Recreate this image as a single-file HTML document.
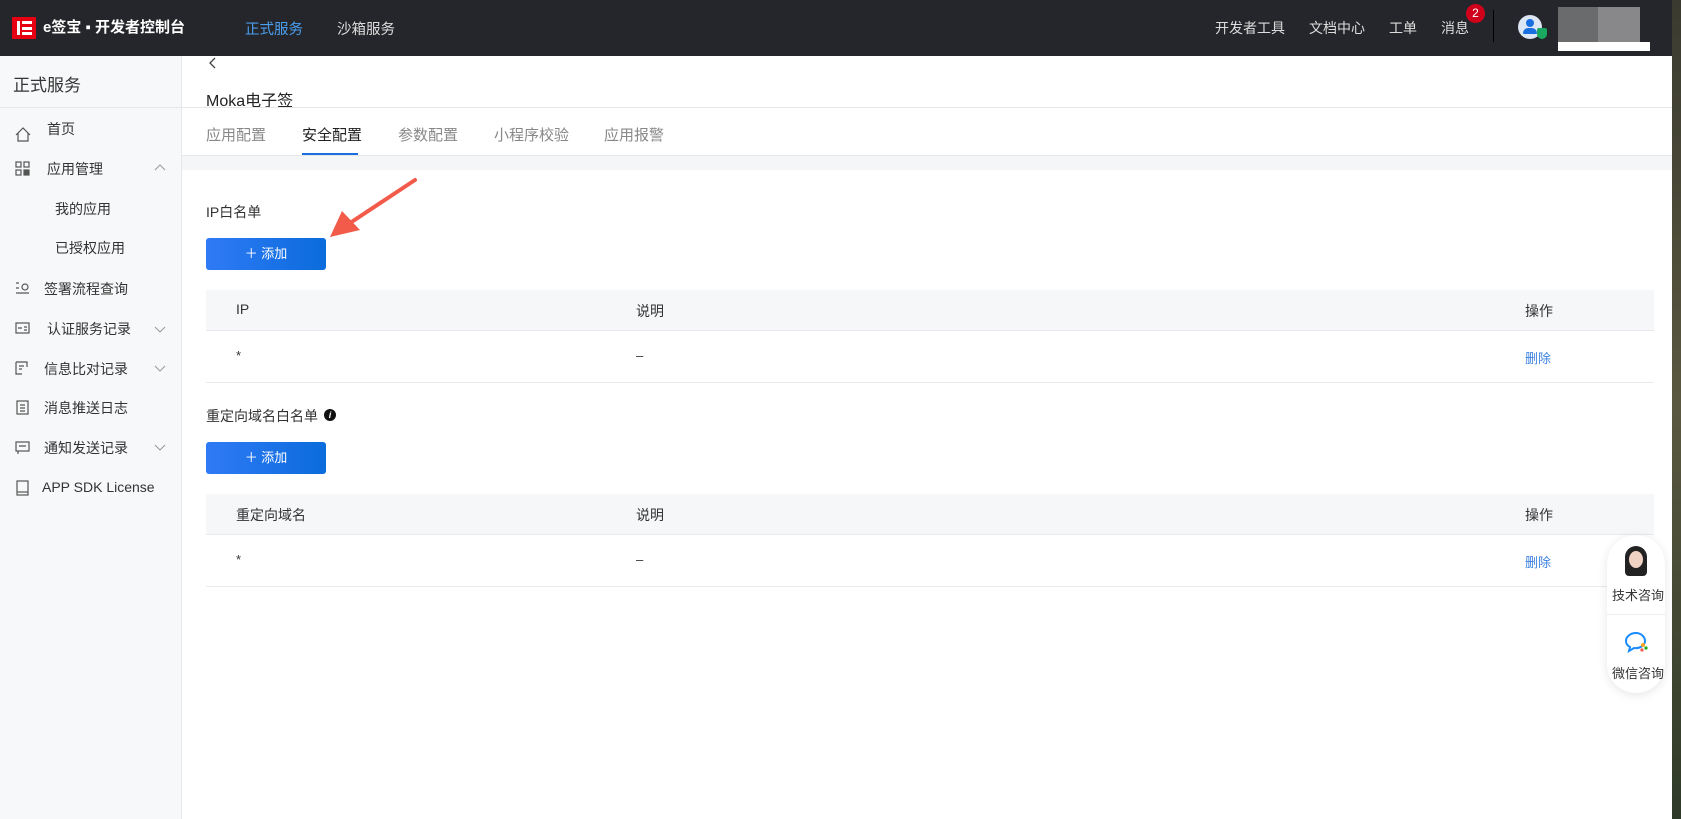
<!DOCTYPE html>
<html><head><meta charset="utf-8"><style>
*{margin:0;padding:0;box-sizing:border-box}
body{width:1681px;height:819px;overflow:hidden;position:relative;background:#fff;font-family:"Liberation Sans","Noto Sans CJK SC",sans-serif;color:#333}
.a{position:absolute;white-space:nowrap}
#hdr{position:absolute;left:0;top:0;width:1672px;height:56px;background:#25262b}
#strip{position:absolute;left:1672px;top:0;width:9px;height:819px;background:linear-gradient(#3a3a30,#5a5840,#2e3a28)}
#side{position:absolute;left:0;top:56px;width:182px;height:763px;background:#f7f8fa;border-right:1px solid #e6e8eb}
.mi{position:absolute;left:47px;font-size:14px;color:#333}
.tab{position:absolute;top:124px;font-size:15px;color:#888}
.btn{position:absolute;left:206px;width:120px;height:32px;border-radius:3px;background:linear-gradient(90deg,#2f7af5,#0b6cdc);color:#fff;font-size:13px;text-align:center;line-height:32px}
.th{position:absolute;left:206px;width:1448px;height:41px;background:#f6f7f9;border-bottom:1px solid #e8eaee;font-size:14px;color:#333}
.tr{position:absolute;left:206px;width:1448px;height:52px;border-bottom:1px solid #e8eaee;font-size:13px;color:#333}
.th span,.tr span{position:absolute}
</style></head><body>
<div id="hdr">
  <div class="a" style="left:12px;top:17px;width:24px;height:22px;background:#e60012"></div>
  <div class="a" style="left:17px;top:21px;width:3px;height:14px;background:#fff"></div>
  <div class="a" style="left:22px;top:21px;width:10px;height:3px;background:#fff"></div>
  <div class="a" style="left:22px;top:26.5px;width:10px;height:3px;background:#fff"></div>
  <div class="a" style="left:22px;top:32px;width:10px;height:3px;background:#fff"></div>
  <div class="a" style="left:43px;top:17px;font-size:15px;font-weight:bold;color:#fff;line-height:22px">e签宝 ▪ 开发者控制台</div>
  <div class="a" style="left:245px;top:18px;font-size:14.5px;color:#4a9ff0">正式服务</div>
  <div class="a" style="left:337px;top:18px;font-size:14.5px;color:#ddd">沙箱服务</div>
  <div class="a" style="left:1215px;top:18px;font-size:14px;color:#ddd">开发者工具</div>
  <div class="a" style="left:1309px;top:18px;font-size:14px;color:#ddd">文档中心</div>
  <div class="a" style="left:1389px;top:18px;font-size:14px;color:#ddd">工单</div>
  <div class="a" style="left:1441px;top:18px;font-size:14px;color:#ddd">消息</div>
  <div class="a" style="left:1466px;top:4px;width:19px;height:19px;border-radius:50%;background:#d0021b;color:#fff;font-size:12px;text-align:center;line-height:19px">2</div>
  <div class="a" style="left:1493px;top:10px;width:1px;height:32px;background:#000"></div>
  <div class="a" style="left:1518px;top:15px;width:24px;height:24px;border-radius:50%;background:#dde6f5"></div>
  <div class="a" style="left:1526px;top:19px;width:8px;height:8px;border-radius:50%;background:#1a6fe0"></div>
  <div class="a" style="left:1523px;top:28px;width:14px;height:6px;border-radius:6px 6px 1px 1px;background:#1a6fe0"></div>
  <div class="a" style="left:1537px;top:28px;width:10px;height:11px;border-radius:2px 2px 5px 5px;background:#1aa860"></div>
  <div class="a" style="left:1558px;top:7px;width:40px;height:35px;background:#6a6b6d"></div>
  <div class="a" style="left:1598px;top:7px;width:42px;height:35px;background:#88888b"></div>
  <div class="a" style="left:1558px;top:42px;width:92px;height:9px;background:#fff"></div>
</div>
<div id="strip"></div>
<div id="side">
  <div class="a" style="left:13px;top:15px;font-size:17px;color:#333">正式服务</div>
  <div class="a" style="left:0;top:51px;width:182px;height:1px;background:#e4e6e9"></div>
</div>
<svg class="a" style="left:0;top:0" width="182" height="819" fill="none" stroke="#555" stroke-width="1.2">
<path d="M16 135 L23 128 L30 135 M18 133 V141 H28 V133"/>
<rect x="16" y="162" width="5" height="5"/><rect x="24" y="162" width="5" height="5"/><rect x="16" y="170" width="5" height="5"/><rect x="24" y="170" width="5" height="5" fill="#555"/>
<path d="M16 283 h3 M16 288 h3 M16 293 h13"/><circle cx="25" cy="287" r="3"/>
<rect x="16" y="323" width="13" height="10"/><path d="M18 328 h4 M24 327 h3 M24 330 h3"/>
<path d="M16 362 h11 v5 M16 362 v12 h6 M19 366 h5 M19 369 h3"/>
<rect x="17" y="401" width="11" height="13"/><path d="M20 405 h5 M20 408 h5 M20 411 h5"/>
<rect x="16" y="442" width="13" height="9"/><path d="M19 446 h7 M18 451 v3"/>
<rect x="17" y="481" width="11" height="14"/><path d="M17 492 h11"/>
<path d="M155 170 l5 -5 l5 5 M155 327 l5 5 l5 -5 M155 366 l5 5 l5 -5 M155 445 l5 5 l5 -5" stroke="#999" stroke-width="1"/>
</svg>
<div class="mi" style="top:119px">首页</div>
<div class="mi" style="top:159px">应用管理</div>
<div class="mi" style="top:199px;left:55px">我的应用</div>
<div class="mi" style="top:238px;left:55px">已授权应用</div>
<div class="mi" style="top:279px;left:44px">签署流程查询</div>
<div class="mi" style="top:319px">认证服务记录</div>
<div class="mi" style="top:359px;left:44px">信息比对记录</div>
<div class="mi" style="top:398px;left:44px">消息推送日志</div>
<div class="mi" style="top:438px;left:44px">通知发送记录</div>
<div class="mi" style="top:479px;left:42px">APP SDK License</div>

<svg class="a" style="left:205px;top:56px" width="16" height="16" fill="none" stroke="#444" stroke-width="1.3"><path d="M10 2 L5 7 L10 12"/></svg>
<div class="a" style="left:206px;top:87px;font-size:16px;color:#222">Moka电子签</div>
<div class="a" style="left:182px;top:107px;width:1490px;height:1px;background:#e4e6e9"></div>
<div class="tab" style="left:206px">应用配置</div>
<div class="tab" style="left:302px;color:#222">安全配置</div>
<div class="tab" style="left:398px">参数配置</div>
<div class="tab" style="left:494px">小程序校验</div>
<div class="tab" style="left:604px">应用报警</div>
<div class="a" style="left:302px;top:153px;width:56px;height:2px;background:#1a6fe0"></div>
<div class="a" style="left:182px;top:155px;width:1490px;height:15px;background:#f5f6f8;border-top:1px solid #e4e6e9"></div>

<div class="a" style="left:206px;top:202px;font-size:14px;color:#333">IP白名单</div>
<div class="btn" style="top:238px">＋ 添加</div>
<div class="th" style="top:290px"><span style="left:30px;top:11px">IP</span><span style="left:430px;top:11px">说明</span><span style="left:1319px;top:11px">操作</span></div>
<div class="tr" style="top:331px"><span style="left:30px;top:17px">*</span><span style="left:430px;top:17px">–</span><span style="left:1319px;top:17px;color:#3b82e0">删除</span></div>

<div class="a" style="left:206px;top:406px;font-size:14px;color:#333">重定向域名白名单</div>
<div class="a" style="left:324px;top:409px;width:12px;height:12px;border-radius:50%;background:#111;color:#fff;font-size:9px;font-style:italic;font-weight:bold;text-align:center;line-height:12px">i</div>
<div class="btn" style="top:442px">＋ 添加</div>
<div class="th" style="top:494px"><span style="left:30px;top:11px">重定向域名</span><span style="left:430px;top:11px">说明</span><span style="left:1319px;top:11px">操作</span></div>
<div class="tr" style="top:535px"><span style="left:30px;top:17px">*</span><span style="left:430px;top:17px">–</span><span style="left:1319px;top:17px;color:#3b82e0">删除</span></div>

<svg class="a" style="left:320px;top:175px" width="100" height="70"><path d="M95 5 L30 48" stroke="#f25a4a" stroke-width="4" stroke-linecap="round"/><path d="M10 62 L22 36 L40 55 Z" fill="#f25a4a"/></svg>

<div class="a" style="left:1607px;top:535px;width:58px;height:158px;border-radius:29px;background:#fff;box-shadow:0 2px 10px rgba(0,0,0,.1)"></div>
<div class="a" style="left:1625px;top:546px;width:22px;height:30px;border-radius:11px 11px 4px 4px;background:#222"></div>
<div class="a" style="left:1629px;top:551px;width:14px;height:17px;border-radius:50%;background:#f0d2c4"></div>
<div class="a" style="left:1612px;top:585px;font-size:13px;color:#333">技术咨询</div>
<div class="a" style="left:1607px;top:614px;width:58px;height:1px;background:#eee"></div>
<svg class="a" style="left:1624px;top:630px" width="26" height="24" fill="none"><path d="M12 3 C6 3 2 7 2 11 C2 14 4 16 6 17 L5 21 L10 18 C16 19 21 15 21 11 C21 7 17 3 12 3Z" stroke="#1a8cff" stroke-width="2"/><circle cx="19" cy="15" r="2" fill="#f6a623"/><circle cx="22" cy="18" r="1.6" fill="#1aad19"/><circle cx="18" cy="20" r="1.6" fill="#f25a4a"/></svg>
<div class="a" style="left:1612px;top:663px;font-size:13px;color:#333">微信咨询</div>
</body></html>
